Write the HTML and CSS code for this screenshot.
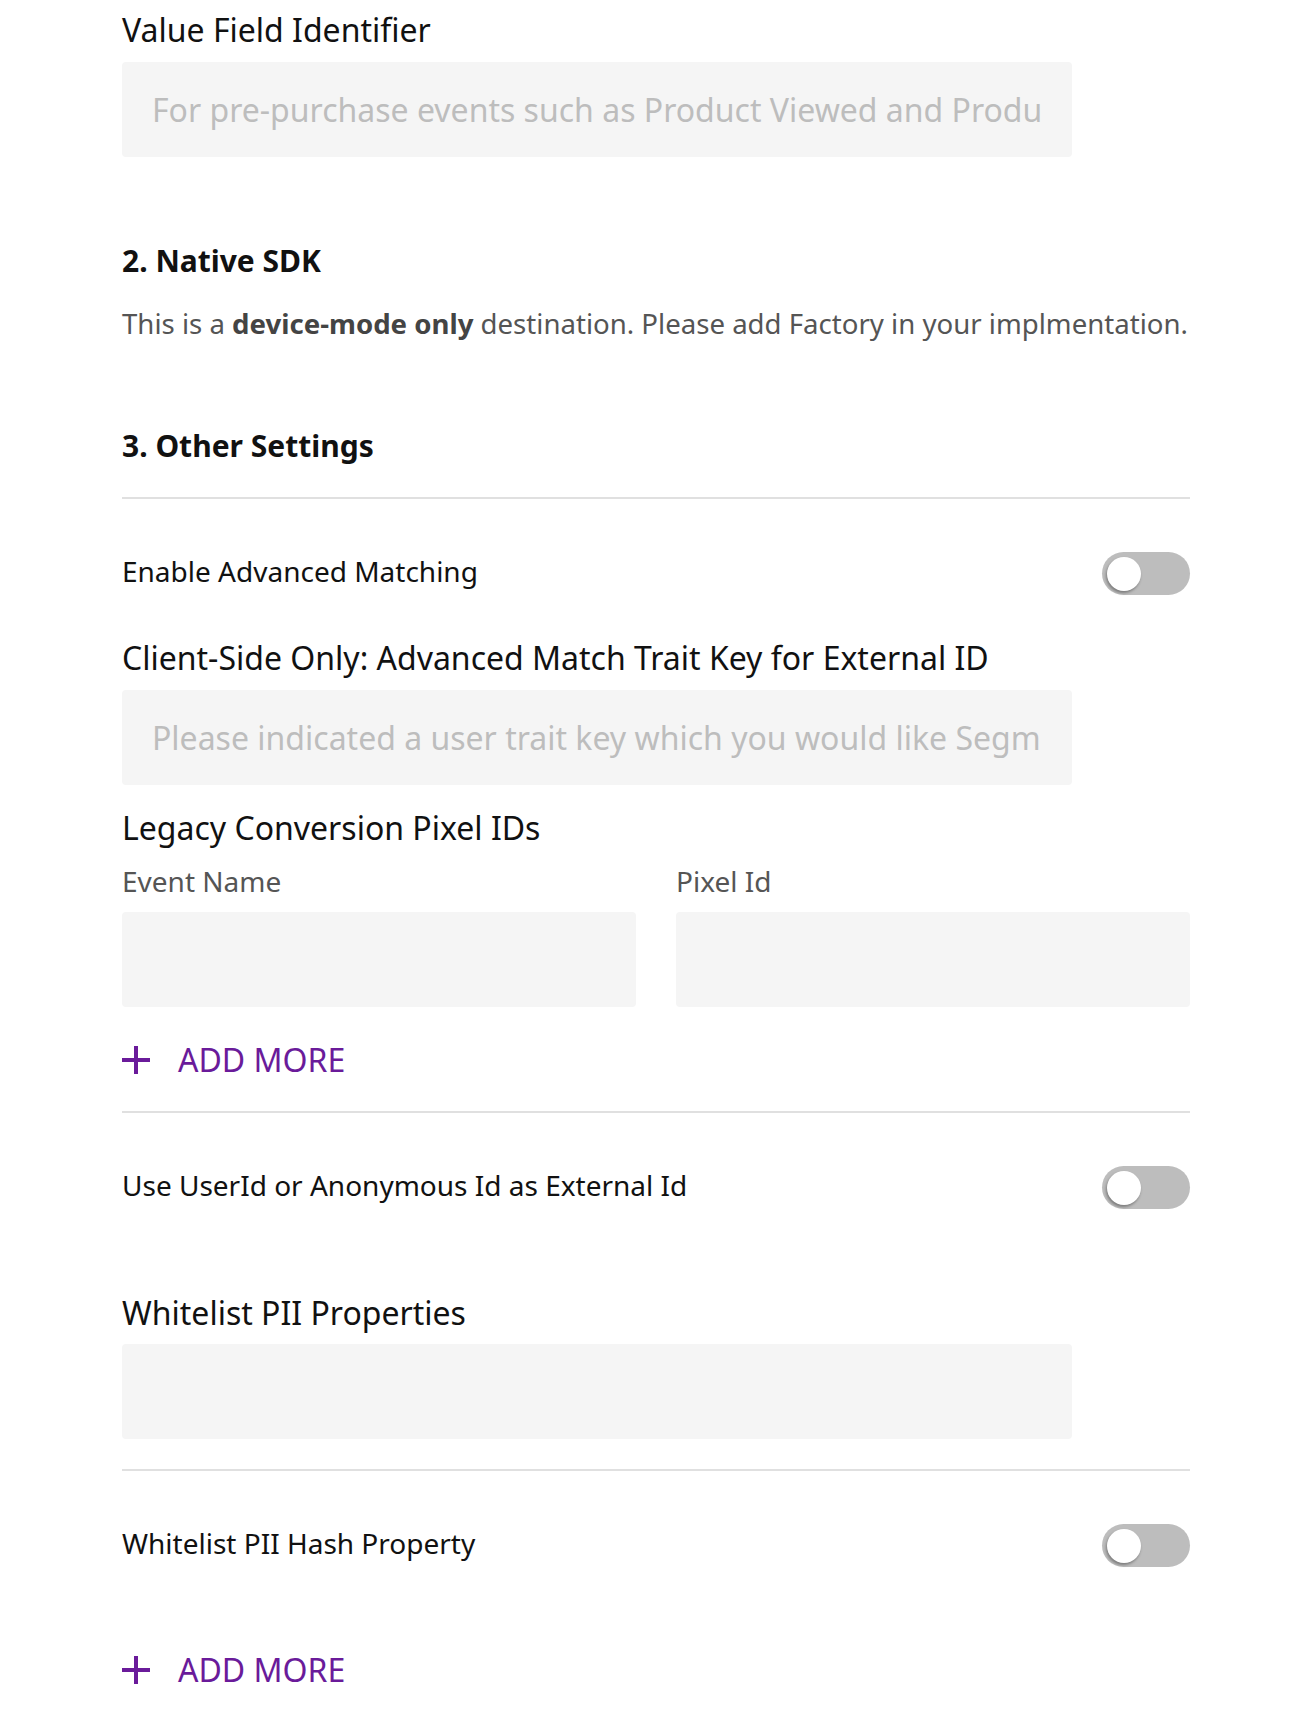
FILE: index.html
```html
<!DOCTYPE html>
<html lang="en">
<head>
<meta charset="utf-8">
<title>Settings</title>
<link rel="stylesheet" href="styles.css">
</head>
<body>
<main class="page">
  <section class="field field-first">
    <label class="field-label">Value Field Identifier</label>
    <div class="input input-single"><span class="placeholder">For pre-purchase events such as Product Viewed and Produ</span></div>
  </section>

  <h2 class="section-title title-native">2. Native SDK</h2>
  <p class="section-text">This is a <strong>device-mode only</strong> destination. Please add Factory in your implmentation.</p>

  <h2 class="section-title title-other">3. Other Settings</h2>
  <hr class="divider divider-top">

  <div class="toggle-row row-first">
    <span class="row-label">Enable Advanced Matching</span>
    <span class="toggle"><span class="knob"></span></span>
  </div>

  <section class="field field-client">
    <label class="field-label">Client-Side Only: Advanced Match Trait Key for External ID</label>
    <div class="input input-single"><span class="placeholder">Please indicated a user trait key which you would like Segm</span></div>
  </section>

  <section class="field field-legacy">
    <label class="field-label">Legacy Conversion Pixel IDs</label>
    <div class="pair">
      <div class="pair-col">
        <span class="sub-label">Event Name</span>
        <div class="input"></div>
      </div>
      <div class="pair-col">
        <span class="sub-label">Pixel Id</span>
        <div class="input"></div>
      </div>
    </div>
    <button class="add-more add-first" type="button">
      <svg class="plus" width="28" height="28" viewBox="0 0 28 28"><path d="M14 0v28M0 14h28" stroke="currentColor" stroke-width="4" fill="none"/></svg>
      <span>ADD MORE</span>
    </button>
  </section>

  <hr class="divider divider-mid">

  <div class="toggle-row row-second">
    <span class="row-label">Use UserId or Anonymous Id as External Id</span>
    <span class="toggle"><span class="knob"></span></span>
  </div>

  <section class="field field-pii">
    <label class="field-label">Whitelist PII Properties</label>
    <div class="input input-single"></div>
  </section>

  <hr class="divider divider-low">

  <div class="toggle-row row-third">
    <span class="row-label">Whitelist PII Hash Property</span>
    <span class="toggle"><span class="knob"></span></span>
  </div>

  <button class="add-more add-last" type="button">
    <svg class="plus" width="28" height="28" viewBox="0 0 28 28"><path d="M14 0v28M0 14h28" stroke="currentColor" stroke-width="4" fill="none"/></svg>
    <span>ADD MORE</span>
  </button>
</main>
</body>
</html>
```

FILE: styles.css
```css
* { box-sizing: border-box; }

html, body {
  margin: 0;
  padding: 0;
  background: #ffffff;
}

body {
  font-family: "Noto Sans", "Open Sans", sans-serif;
  color: #111111;
}

.page {
  width: 1068px;
  margin-left: 122px;
  padding-top: 8px;
  padding-bottom: 30px;
}

.field { display: block; }

.field-label {
  display: block;
  font-size: 32px;
  line-height: 44px;
  color: #111111;
  margin-bottom: 10px;
}

.input {
  height: 95px;
  background: #f5f5f5;
  border-radius: 4px;
  padding: 0 30px;
  display: flex;
  align-items: center;
  overflow: hidden;
}

.input-single { width: 950px; }

.placeholder {
  font-size: 32px;
  color: #bdbdbd;
  white-space: nowrap;
}

.section-title {
  margin: 0;
  font-size: 30px;
  line-height: 36px;
  font-weight: 700;
  color: #111111;
}

.title-native { margin-top: 86px; }
.title-other { margin-top: 87px; }

.section-text {
  margin: 26px 0 0;
  font-size: 27.6px;
  line-height: 36px;
  color: #555555;
  white-space: nowrap;
}

.section-text strong {
  font-weight: 700;
  color: #444444;
}

.divider {
  border: 0;
  height: 2px;
  background: #e0e0e0;
  margin: 0;
}

.divider-top { margin-top: 33px; }
.divider-mid { margin-top: 29px; }
.divider-low { margin-top: 30px; }

.toggle-row {
  display: flex;
  align-items: center;
  justify-content: space-between;
  height: 43px;
  margin-top: 53px;
}

.row-label {
  font-size: 28px;
  line-height: 40px;
  color: #111111;
  margin-bottom: 6px;
}

.toggle {
  position: relative;
  width: 88px;
  height: 43px;
  border-radius: 22px;
  background: #bdbdbd;
  flex: none;
}

.knob {
  position: absolute;
  left: 5px;
  top: 5px;
  width: 34px;
  height: 34px;
  border-radius: 50%;
  background: #ffffff;
  box-shadow: -1px 2px 3px rgba(0, 0, 0, 0.35);
}

.field-client { margin-top: 41px; }
.field-client .field-label { margin-bottom: 10px; }

.field-legacy { margin-top: 21px; }
.field-legacy .field-label { margin-bottom: 11px; }

.pair {
  display: grid;
  grid-template-columns: 514px 514px;
  column-gap: 40px;
}

.pair-col {
  display: flex;
  flex-direction: column;
}

.sub-label {
  font-size: 28px;
  line-height: 40px;
  color: #555555;
  margin-bottom: 11px;
}

.add-more {
  display: flex;
  align-items: center;
  gap: 28px;
  background: none;
  border: 0;
  padding: 0;
  margin: 0;
  height: 44px;
  color: #6a1b9a;
  font-family: "Noto Sans", "Open Sans", sans-serif;
  font-size: 32px;
  line-height: 44px;
  cursor: pointer;
}

.plus { flex: none; }

.add-first { margin-top: 31px; }
.add-last { margin-top: 81px; }

.field-pii { margin-top: 82px; }
.field-pii .field-label { margin-bottom: 9px; }
```
